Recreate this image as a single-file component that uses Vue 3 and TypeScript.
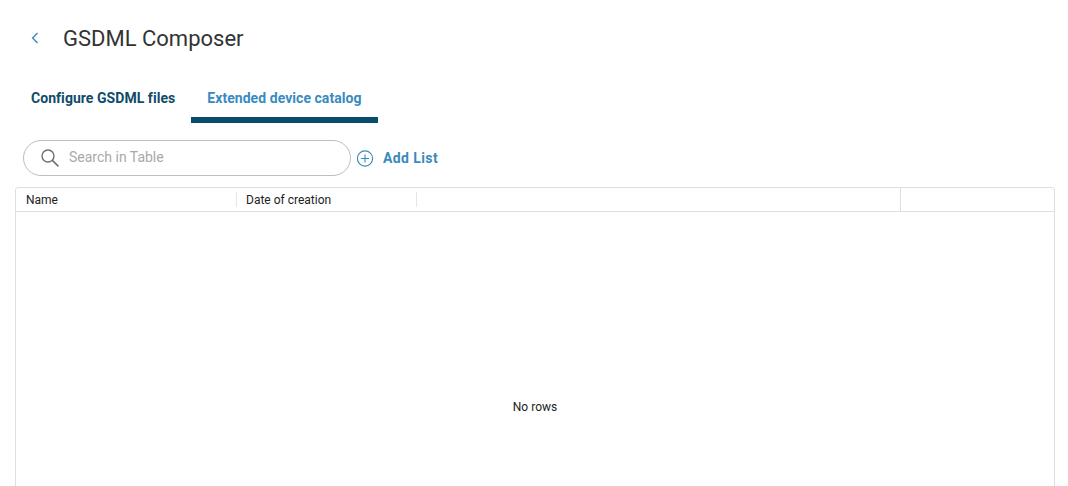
<script setup lang="ts">
const columns: { label: string; width: string; cls: string }[] = [
  { label: 'Name', width: '221px', cls: 'name' },
  { label: 'Date of creation', width: '180px', cls: 'date' },
  { label: '', width: '484px', cls: 'fill' },
  { label: '', width: '153px', cls: 'actions' },
]
</script>

<template>
  <div class="page">
    <header class="title-row">
      <button class="back" aria-label="Back">
        <svg width="10" height="14" viewBox="0 0 10 14" fill="none">
          <path d="M7.5 2 2.6 7l4.9 5" stroke="#3a8bb7" stroke-width="1.4" />
        </svg>
      </button>
      <h1>GSDML Composer</h1>
    </header>

    <nav class="tabs">
      <div class="tab">Configure GSDML files</div>
      <div class="tab active">Extended device catalog</div>
    </nav>

    <div class="toolbar">
      <label class="search">
        <svg width="20" height="20" viewBox="0 0 20 20" fill="none">
          <circle cx="8" cy="8" r="6" stroke="#6f6f6f" stroke-width="1.4" />
          <path d="M12.4 12.4 18.4 18.4" stroke="#6f6f6f" stroke-width="1.5" />
        </svg>
        <input type="text" placeholder="Search in Table" />
      </label>
      <button class="add">
        <svg width="17" height="17" viewBox="0 0 17 17" fill="none">
          <circle cx="8" cy="8.5" r="7.6" stroke="#3a8bb7" stroke-width="1.1" />
          <path d="M8 4.4v8.2M3.9 8.5h8.2" stroke="#3a8bb7" stroke-width="1.1" />
        </svg>
        <span>Add List</span>
      </button>
    </div>

    <section class="table">
      <div class="thead">
        <div v-for="col in columns" :key="col.cls" class="th" :class="col.cls" :style="{ width: col.width }">{{ col.label }}</div>
      </div>
      <div class="tbody">No rows</div>
    </section>
  </div>
</template>

<style>
html, body { margin: 0; background: #fff; overflow: hidden; }
</style>

<style scoped>
.page {
  height: 486px;
  overflow: hidden;
  padding: 0 13px 0 15px;
  box-sizing: border-box;
  font-family: Roboto, "Liberation Sans", sans-serif;
  background: #fff;
}
.title-row {
  display: flex;
  align-items: center;
  height: 76px;
  padding-left: 15px;
}
.back {
  display: flex;
  width: 33px;
  padding: 0;
  border: 0;
  background: none;
}
h1 {
  margin: 0;
  font-size: 22px;
  font-weight: 400;
  color: #333;
}
.tabs {
  display: flex;
  height: 47px;
}
.tab {
  box-sizing: border-box;
  padding: 14px 16px 0;
  font-size: 14px;
  font-weight: 700;
  letter-spacing: 0.05px;
  color: #0f4c68;
}
.tab.active {
  color: #3a8bbd;
  border-bottom: 6px solid #084c6c;
}
.toolbar {
  display: flex;
  align-items: center;
  height: 36px;
  margin-top: 17px;
  padding-left: 8px;
}
.search {
  display: flex;
  align-items: center;
  gap: 9px;
  box-sizing: border-box;
  width: 328px;
  height: 36px;
  padding-left: 16px;
  padding-bottom: 2px;
  border: 1px solid #bdbdbd;
  border-radius: 18px;
}
.search svg { margin-top: 2px; }
.search input {
  flex: 1;
  min-width: 0;
  padding: 0;
  border: 0;
  outline: 0;
  font: 400 14px Roboto, sans-serif;
  background: transparent;
}
.search input::placeholder { color: #a9a9a9; opacity: 1; }
.add {
  display: flex;
  align-items: center;
  gap: 9px;
  margin-left: 6px;
  padding: 0;
  border: 0;
  background: none;
  font: 700 14px Roboto, sans-serif;
  letter-spacing: 0.4px;
  color: #3a8bbd;
}
.table {
  box-sizing: border-box;
  height: 320px;
  margin-top: 11px;
  border: 1px solid #dfdfdf;
  border-radius: 3px;
}
.thead {
  display: flex;
  height: 24px;
  box-sizing: border-box;
  border-bottom: 1px solid #dfdfdf;
}
.th {
  flex: none;
  box-sizing: border-box;
  padding: 0 10px;
  font-size: 12px;
  line-height: 24px;
  color: #222;
  position: relative;
}
.th.date { padding-left: 9px; }
.th:not(:last-child)::after {
  content: "";
  position: absolute;
  right: 0;
  top: 4px;
  bottom: 4px;
  width: 1px;
  background: #e6e6e6;
}
.th.fill { flex: 0 0 484px; }
.th.fill::after { top: 0; bottom: 0; background: #dfdfdf; }
.tbody {
  display: flex;
  align-items: center;
  justify-content: center;
  height: 390px;
  font-size: 12px;
  color: #222;
}
</style>
